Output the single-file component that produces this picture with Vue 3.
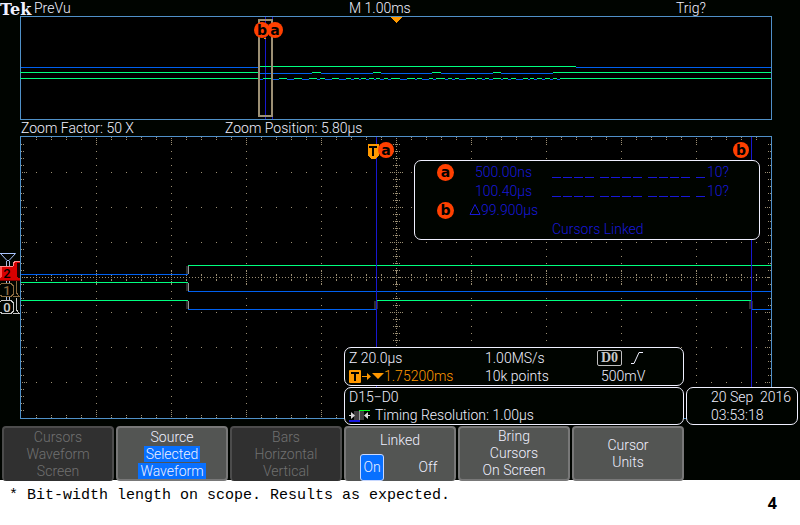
<script setup>
import { ref } from 'vue'

const linked = ref(true)

const dot = (x, y) => `M${x} ${y}h1v1h-1z`

// Graticule of the zoomed view: 10 x 8 divisions of 75 x 35 units, centred at (376, 141)
function buildGraticule() {
  const out = []
  for (let i = 1; i < 50; i++) {
    const x = 1 + i * 15
    const major = i % 5 === 0
    for (let r = 1; r < 8; r++) out.push(dot(x, 1 + r * 35))
    for (const d of major ? [2, 4, 6, 8] : [1, 3]) {
      out.push(dot(x, d), dot(x, 282 - d))
    }
    for (const d of major ? [2, 4, 6] : [2, 3]) {
      out.push(dot(x, 141 - d), dot(x, 141 + d))
    }
  }
  for (let j = 1; j < 40; j++) {
    const y = 1 + j * 7
    const major = j % 5 === 0
    for (let c = 1; c < 10; c++) out.push(dot(1 + c * 75, y))
    for (const d of major ? [2, 4, 6] : [1, 3]) {
      out.push(dot(d, y), dot(751 - d, y))
    }
    for (const d of major ? [2, 4, 6] : [1, 3]) {
      out.push(dot(376 - d, y), dot(376 + d, y))
    }
    out.push(dot(376, y + 2), dot(376, y + 5))
  }
  for (let x = 4; x < 750; x += 3) out.push(dot(x, 141))
  return out.join('')
}
const graticule = buildGraticule()

// Each segment: [start, end] of a high level
const bursts = [
  [0, 240], [243, 252], [259, 267], [274, 282], [289, 297], [300, 305], [312, 319],
  [326, 331], [334, 339], [341, 346], [349, 354], [356, 360], [364, 368], [371, 380],
  [387, 395], [397, 402], [409, 413], [416, 425], [428, 432], [435, 439], [446, 455],
  [457, 462], [465, 469], [473, 481], [483, 488], [491, 496], [503, 508], [510, 514],
  [517, 522], [525, 530], [533, 537], [540, 751]
]
const frames = [[0, 240], [292, 301], [353, 361], [412, 421], [473, 481], [533, 751]]

function levels(highs, top) {
  const high = []
  const low = []
  highs.forEach(([a, b], i) => {
    high.push(`M${a} ${top}H${b}v1H${a}z`)
    if (highs[i + 1]) low.push(`M${b} ${top + 1}H${highs[i + 1][0]}v1H${b}z`)
  })
  return { high: high.join(''), low: low.join('') }
}
const overview = [
  { high: 'M240 50H556v1H240z', low: 'M1 51H240v1H1zM556 51H751v1H556z' },
  levels(frames, 56),
  levels(bursts, 62)
]

const bits = [4, 4, 4, 1]
const readings = [
  { badge: 'a', value: '500.00ns' },
  { badge: '', value: '100.40µs' }
]
</script>

<template>
  <main class="page">
    <section class="scope">
      <header class="top">
        <span class="brand">Tek</span>
        <span>PreVu</span>
        <span>M 1.00ms</span>
        <span>Trig?</span>
      </header>

      <svg class="overview" viewBox="0 0 752 104" shape-rendering="crispEdges">
        <rect width="752" height="104" fill="#5090c8" />
        <rect x="1" y="1" width="750" height="102" fill="#000" />
        <path d="M245 1h1v102h-1zM252 1h1v102h-1z" fill="#1818d0" />
        <g v-for="(t, i) in overview" :key="i">
          <path :d="t.high" fill="#00ff80" />
          <path :d="t.low" fill="#0060f0" />
        </g>
        <path d="M238 3h15v98h-15zM240 5v94h11v-94z" fill="#9c8f74" fill-rule="evenodd" />
        <path d="M371 1h11v1h-1v1h-1v1h-1v1h-1v1h-1v1h-1v-1h-1v-1h-1v-1h-1v-1h-1v-1h-1z" fill="#ff9800" />
        <g shape-rendering="auto">
          <circle cx="255" cy="14" r="8" fill="#ff4000" />
          <circle cx="242" cy="14" r="8" fill="#ff4000" />
          <text class="mark" x="255" y="19">a</text>
          <text class="mark" x="242" y="19">b</text>
        </g>
        <path d="M244 22h2v1h-2z" fill="#ff9800" />
      </svg>

      <div class="zoombar">
        <span class="factor">Zoom Factor: 50 X</span>
        <span>Zoom Position: 5.80µs</span>
      </div>

      <div class="stage">
        <svg class="gutter" viewBox="0 0 20 283" shape-rendering="crispEdges">
          <path d="M0 117.5H15.5M0.5 117.5L7 124.5H9L15.5 117.5" fill="none" stroke="#a8c4ff" shape-rendering="auto" />
          <path d="M6.500 125v6M9.500 125v6M6.500 144v4M9.500 144v4M6.500 161v4M9.500 161v4" stroke="#a8b8e0" />
          <path d="M0 130h13v-3l2-2h5v20H0z" fill="#d80000" />
          <path d="M0 130.500h13M13.500 130v-3l2-2h4" fill="none" stroke="#ff9090" />
          <path d="M0 131h2v9l-2 2z" fill="#ff5050" />
          <path d="M17 127h3v15h-2l-1-2z" fill="#200000" />
          <path d="M0 144.500h20" stroke="#800000" />
          <g fill="none" stroke="#8a6a40">
            <path d="M0 149l2-1.500h9l2 2v9l-2 2H2l-2-1.500M16.500 145v12l3 4M13 160.500h6" />
          </g>
          <g fill="none" stroke="#c8c8c8">
            <path d="M0 166l2-1.500h9l2 2v9l-2 2H2l-2-1.500M16.500 162v12l3 4M13 177.500h6" />
          </g>
          <text class="chan" x="7" y="142" fill="#000">2</text>
          <text class="chan" x="7" y="159" fill="#8a6a40">1</text>
          <text class="chan" x="7" y="176" fill="#d0d0d0">0</text>
        </svg>

        <svg class="plot" viewBox="0 0 752 283" shape-rendering="crispEdges">
          <rect width="752" height="283" fill="#5090c8" />
          <rect x="1" y="1" width="750" height="281" fill="#000" />
          <path :d="graticule" fill="#9c8f74" />
          <path d="M166 130h3v8h-3zM166 147h3v8h-3zM166 165h3v8h-3zM354 165h4v8h-4zM729 165h4v8h-4z" fill="#303030" />
          <path d="M168 130h1v8h-1zM168 147h1v8h-1zM168 165h1v8h-1z" fill="#989898" />
          <path d="M168 129H751v1H168zM1 146H168v1H1zM1 164H168v1H1zM356 164H731v1H356z" fill="#00ff80" />
          <path d="M1 138H168v1H1zM168 155H751v1H168zM168 173H356v1H168zM731 173H751v1H731z" fill="#0060f0" />
          <path d="M356 1h1v281h-1zM731 1h1v281h-1z" fill="#1818d0" />
          <path d="M348 8h11v12l-4 3h-3l-4-3z" fill="#ff9800" />
          <path d="M349 10h8v2h-3v8h-2v-8h-3z" fill="#000" />
          <g shape-rendering="auto">
            <circle cx="366" cy="14" r="8" fill="#ff4000" />
            <circle cx="721" cy="14" r="8" fill="#ff4000" />
            <text class="mark" x="366" y="19">a</text>
            <text class="mark" x="721" y="19">b</text>
          </g>
        </svg>

        <aside class="panel cursors">
          <div v-for="r in readings" :key="r.value" class="reading">
            <span><b v-if="r.badge" class="badge">{{ r.badge }}</b></span>
            <span class="value">{{ r.value }}</span>
            <span class="bits">
              <span v-for="(n, g) in bits" :key="g" class="nibble">
                <i v-for="k in n" :key="k" class="bit"></i>
              </span>
            </span>
            <span>10?</span>
          </div>
          <div class="reading">
            <span><b class="badge">b</b></span>
            <span class="delta">
              <svg width="12" height="12" viewBox="0 0 12 12"><path d="M1 11.500h10L6 1.500z" fill="none" stroke="currentColor" /></svg>99.900µs
            </span>
          </div>
          <div class="reading"><span class="note">Cursors Linked</span></div>
        </aside>

        <div class="status">
          <div class="stack">
            <div class="panel acquisition">
              <span>Z 20.0µs</span>
              <span>1.00MS/s</span>
              <span class="source">
                <b class="input">D0</b>
                <svg width="12" height="14" viewBox="0 0 12 14"><path d="M0 12.500h3L8 1.500h4" fill="none" stroke="#f0f0ff" /></svg>
              </span>
              <span class="delay">
                <svg width="35" height="14" viewBox="0 0 35 14" fill="#ff9800">
                  <rect y="1" width="12" height="13" rx="1" />
                  <path d="M2 3h8v2H7v7H5V5H2z" fill="#000" />
                  <path d="M13 7h5V4l4 3.500-4 3.500V8h-5zM23 4h12l-6 6z" />
                </svg>1.75200ms
              </span>
              <span>10k points</span>
              <span class="level">500mV</span>
            </div>
            <div class="panel digital">
              <span>D15−D0</span>
              <span class="resolution">
                <svg width="21" height="13" viewBox="0 0 21 13">
                  <path d="M5 2h10v9H5z" fill="#404040" />
                  <path d="M10 1h1v11h-1z" fill="#989898" />
                  <path d="M10 1.500h11" stroke="#00ff20" />
                  <path d="M0 12h11" stroke="#1818e0" stroke-width="2" />
                  <path d="M0 6h2V3l4 3.500L2 10V7H0zM21 6h-2V3l-4 3.500 4 3.500V7h2z" fill="#d8d8d8" />
                </svg>
                Timing Resolution: 1.00µs
              </span>
            </div>
          </div>
          <div class="panel clock">
            <span>20 Sep&nbsp; 2016</span>
            <span>03:53:18</span>
          </div>
        </div>
      </div>

      <nav class="softkeys">
        <button class="key" disabled>
          <span>Cursors</span><span>Waveform</span><span>Screen</span>
        </button>
        <button class="key">
          <span>Source</span><span class="chosen">Selected</span><span class="chosen">Waveform</span>
        </button>
        <button class="key" disabled>
          <span>Bars</span><span>Horizontal</span><span>Vertical</span>
        </button>
        <button class="key toggle" @click="linked = !linked">
          <span>Linked</span>
          <span class="options">
            <span class="option" :class="{ active: linked }">On</span>
            <span class="option" :class="{ active: !linked }">Off</span>
          </span>
        </button>
        <button class="key">
          <span>Bring</span><span>Cursors</span><span>On Screen</span>
        </button>
        <button class="key">
          <span>Cursor</span><span>Units</span>
        </button>
      </nav>
    </section>

    <footer class="caption">
      <p class="remark">* Bit-width length on scope. Results as expected.</p>
      <span class="number">4</span>
    </footer>
  </main>
</template>

<style>
body {
  margin: 0;
  background: #fff;
}
</style>

<style scoped>
.page {
  font-family: Roboto, "Liberation Sans", sans-serif;
  font-size: 14px;
  font-weight: 300;
  color: #f0f0ff;
}
.scope {
  background: #000400;
}
.top {
  display: grid;
  grid-template-columns: 34px 315px 1fr 124px;
  height: 16px;
  line-height: 16px;
}
.brand {
  font-family: "DejaVu Serif", serif;
  font-size: 16px;
  font-weight: 700;
  line-height: 19px;
}
.overview {
  display: block;
  width: calc(100% - 48px);
  margin-left: 20px;
}
.zoombar {
  display: flex;
  height: 16px;
  padding-left: 21px;
  line-height: 16px;
}
.factor {
  width: 204px;
}
.stage {
  position: relative;
  display: grid;
  grid-template-columns: 20px 1fr 28px;
  align-items: start;
  padding-bottom: 7px;
}
.gutter,
.plot {
  display: block;
  width: 100%;
}
.mark {
  font-family: "DejaVu Sans", sans-serif;
  font-size: 14px;
  font-weight: 700;
  text-anchor: middle;
  fill: #000;
}
.chan {
  font-family: Roboto, sans-serif;
  font-size: 13px;
  font-weight: 500;
  text-anchor: middle;
}
.panel {
  box-sizing: border-box;
  border: 1px solid #f0f0ff;
  border-radius: 7px;
  background: #000400;
}
.cursors {
  position: absolute;
  top: 24px;
  right: 40px;
  width: 346px;
  padding-top: 2px;
  color: #1818d8;
}
.reading {
  display: grid;
  grid-template-columns: 32px 83px 155px 1fr;
  height: 19px;
  padding-left: 22px;
  line-height: 19px;
}
.badge {
  display: block;
  width: 17px;
  height: 17px;
  margin-top: 1px;
  border-radius: 50%;
  background: #ff4000;
  color: #000;
  font-family: "DejaVu Sans", sans-serif;
  font-weight: 700;
  line-height: 16px;
  text-align: center;
}
.value {
  padding-left: 6px;
}
.delta {
  white-space: nowrap;
}
.bits {
  display: flex;
  gap: 6px;
  height: 15px;
  align-items: flex-end;
}
.nibble {
  display: flex;
  gap: 2px;
}
.bit {
  width: 9px;
  height: 1px;
  background: currentColor;
}
.note {
  grid-column: 3 / 5;
}
.status {
  position: absolute;
  right: 2px;
  bottom: 1px;
  display: flex;
  gap: 2px;
  align-items: flex-end;
  line-height: 18px;
}
.stack {
  display: grid;
  gap: 1px;
  width: 340px;
}
.acquisition {
  display: grid;
  grid-template-columns: 136px 112px 1fr;
  height: 39px;
  padding: 1px 4px;
}
.source {
  display: flex;
  gap: 9px;
  align-items: center;
}
.input {
  box-sizing: border-box;
  width: 25px;
  height: 16px;
  border: 1px solid #c0c0c0;
  border-radius: 2px;
  color: #c8c8c8;
  font-family: "Liberation Serif", serif;
  font-weight: 700;
  line-height: 14px;
  text-align: center;
}
.delay {
  display: flex;
  align-items: center;
  color: #ff9800;
}
.level {
  padding-left: 4px;
}
.digital,
.clock {
  display: grid;
  height: 38px;
  padding: 0 4px;
}
.resolution {
  display: flex;
  gap: 5px;
  align-items: center;
}
.clock {
  width: 112px;
  padding-left: 24px;
  white-space: nowrap;
}
.softkeys {
  display: grid;
  grid-template-columns: repeat(6, 1fr);
  gap: 2px;
  height: 54px;
  padding: 0 116px 0 2px;
}
.key {
  display: flex;
  flex-direction: column;
  align-items: center;
  justify-content: center;
  padding: 0;
  border: 2px solid #787878;
  border-radius: 4px;
  background: #535553;
  color: #f0f0ff;
  font: inherit;
  line-height: 17px;
}
.key:disabled {
  border-color: #4c4c4c;
  border-bottom: 0;
  background: #303030;
  color: #707070;
}
.chosen {
  padding: 0 2px;
  background: #0870ff;
  line-height: 16px;
}
.chosen + .chosen {
  margin-top: 1px;
}
.toggle {
  gap: 5px;
  justify-content: flex-end;
  border-bottom: 0;
}
.options {
  display: grid;
  grid-template-columns: 1fr 1fr;
  gap: 4px;
  width: 100%;
  justify-items: center;
}
.option {
  padding: 4px 2px;
  border: 1px solid transparent;
  border-radius: 3px;
}
.option.active {
  border-color: #c8d8ff;
  background: #0870ff;
}
.caption {
  display: flex;
  justify-content: space-between;
  padding: 7px 23px 6px 9px;
  color: #000;
}
.remark {
  margin: 0;
  font-family: "Liberation Mono", monospace;
  font-size: 15px;
  font-weight: 400;
  line-height: 18px;
}
.number {
  padding-top: 5px;
  font-family: "Noto Sans", sans-serif;
  font-size: 16px;
  font-weight: 700;
  line-height: 22px;
}
</style>
